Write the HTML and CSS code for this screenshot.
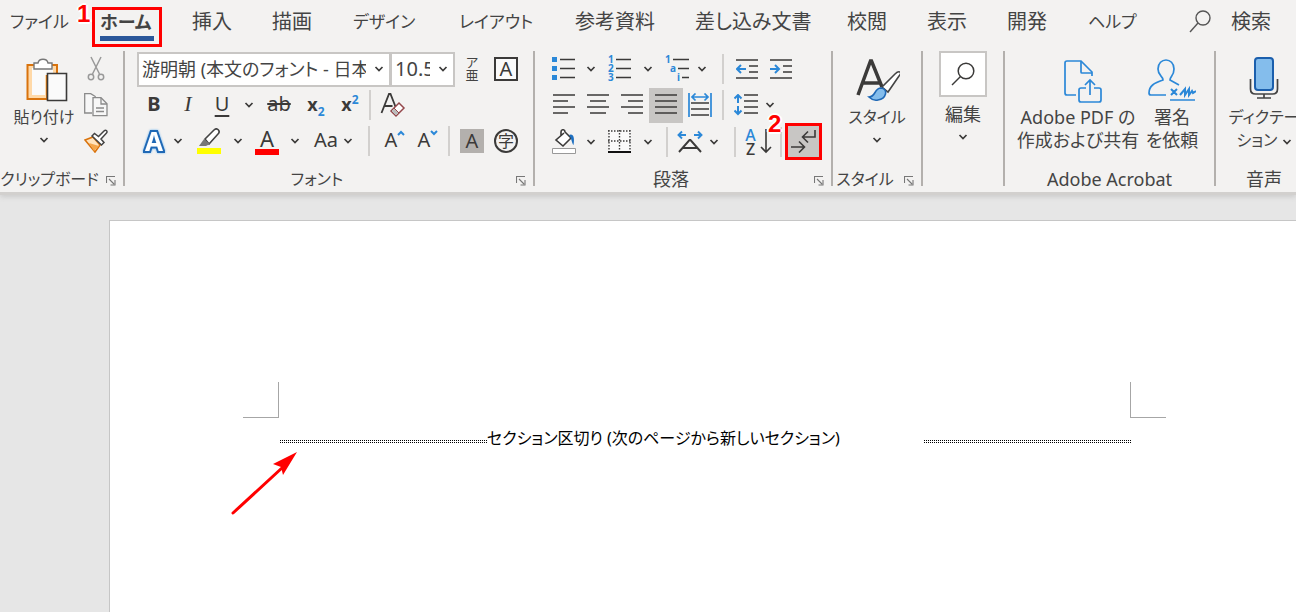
FILE: index.html
```html
<!DOCTYPE html>
<html lang="ja">
<head>
<meta charset="utf-8">
<title>Word</title>
<link rel="stylesheet" href="styles.css">
</head>
<body>
<svg class="defs" aria-hidden="true">
  <symbol id="caret" viewBox="0 0 10 8"><path d="M1.500 2L5 5.500 8.500 2" fill="none" stroke="#3b3a39" stroke-width="1.700"/></symbol>
  <symbol id="launcher" viewBox="0 0 10 10"><path d="M.5 7V.5H9M3 3l5 5M9 4v5H4.500" fill="none" stroke="#777" stroke-width="1.100"/></symbol>
</svg>

<header class="app-header">
  <nav class="tabs" aria-label="リボン タブ">
    <a class="tab kana" href="#">ファイル</a>
    <a class="tab kana current" href="#" aria-current="page">ホーム<span class="step step-one">1</span></a>
    <a class="tab" href="#">挿入</a>
    <a class="tab" href="#">描画</a>
    <a class="tab kana" href="#">デザイン</a>
    <a class="tab kana" href="#">レイアウト</a>
    <a class="tab" href="#">参考資料</a>
    <a class="tab" href="#">差し込み文書</a>
    <a class="tab" href="#">校閲</a>
    <a class="tab" href="#">表示</a>
    <a class="tab" href="#">開発</a>
    <a class="tab kana" href="#">ヘルプ</a>
    <a class="tab search" href="#"><svg width="22" height="24" viewBox="0 0 22 24"><g fill="none" stroke="#555" stroke-width="1.400"><circle cx="14" cy="9" r="7"/><path d="M9 14L1 23"/></g></svg>検索</a>
  </nav>

  <div class="ribbon">
    <section class="group clipboard" aria-label="クリップボード">
      <div class="clip-body">
        <button class="big">
          <svg width="48" height="46" viewBox="-6 0 48 46"><path d="M3 8h28v10H21v24H1.500V8z" fill="#ffd9a8" stroke="#d9730d" stroke-width="2"/><path d="M6 11h21v7h-8v20H6z" fill="#fafafa"/><path d="M8 12V6h4c1-5 9-5 10 0h4v6z" fill="#fff" stroke="#777" stroke-width="1.400"/><path d="M21.500 16.500h19v27h-19z" fill="#fafafa" stroke="#3b3a39" stroke-width="1.600"/></svg>
          <span class="text kana-label">貼り付け</span>
          <svg class="caret"><use href="#caret"/></svg>
        </button>
        <div class="stack">
          <button aria-label="切り取り"><svg width="18" height="26" viewBox="0 0 18 26"><g fill="none" stroke="#999" stroke-width="1.500"><path d="M4 1l8.500 17M14 1L5.500 18"/><circle cx="4" cy="21" r="2.700"/><circle cx="14" cy="21" r="2.700"/></g></svg></button>
          <button aria-label="コピー"><svg width="24" height="24" viewBox="0 0 24 24"><g fill="#f7f7f7" stroke="#8a8a8a" stroke-width="1.300"><path d="M8 20H.7V.7h6l5 3"/><path d="M9 4.700h8l6 6v12H9z"/><path d="M17 5v6h6M12 15h8M12 18.500h8" fill="none"/></g></svg></button>
          <button aria-label="書式のコピー"><svg width="24" height="24" viewBox="0 0 24 24"><path d="M1 11l8-3 7 8-5 7z" fill="#ffe3bd" stroke="#d9730d" stroke-width="1.600"/><path d="M5 14l10 3-5 5z" fill="#f5a64a"/><path d="M8 7l2.500-2.500 4 3L20 2c2-2 4 .5 2.500 2L17 10l3 3.500L17.500 16z" fill="#fff" stroke="#444" stroke-width="1.500"/></svg></button>
        </div>
      </div>
      <footer class="caption kana-label"><span>クリップボード</span><button class="launch" aria-label="クリップボード オプション"><svg width="10" height="10"><use href="#launcher"/></svg></button></footer>
    </section>
    <i class="divider"></i>

    <section class="group font" aria-label="フォント">
      <div class="row font-one">
        <label class="combo"><input type="text" aria-label="フォント名" value="游明朝 (本文のフォント - 日本語)"><svg class="caret"><use href="#caret"/></svg></label>
        <label class="combo size"><input type="text" aria-label="フォント サイズ" value="10.5"><svg class="caret"><use href="#caret"/></svg></label>
        <button class="ruby" aria-label="ルビ"><span>ア</span><span>亜</span></button>
        <button aria-label="囲み線"><span class="boxed">A</span></button>
      </div>
      <div class="row font-two">
        <button class="glyph bold">B</button>
        <button class="glyph italic">I</button>
        <button class="glyph under">U</button>
        <button aria-label="下線の種類"><svg class="caret"><use href="#caret"/></svg></button>
        <button class="glyph strike">ab</button>
        <button class="glyph script">x<sub>2</sub></button>
        <button class="glyph script">x<sup>2</sup></button>
        <i class="rule"></i>
        <button aria-label="書式のクリア"><svg width="26" height="26" viewBox="0 0 26 26"><path d="M1.500 21L9 2h1.500L16 16M4.500 14h8" fill="none" stroke="#3b3a39" stroke-width="1.800"/><path d="M11 19l8-8 5 5-8 8z" fill="#fff" stroke="#94474b" stroke-width="1.500"/><path d="M11 19l3-3 5 5-3 3z" fill="#bbb" stroke="#94474b"/></svg></button>
      </div>
      <div class="row font-three">
        <button class="effect">A</button>
        <button aria-label="文字の効果"><svg class="caret"><use href="#caret"/></svg></button>
        <button aria-label="蛍光ペン"><svg width="24" height="26" viewBox="0 0 24 26"><path d="M8 11l9-9c3-3 7 1 4 4l-9 10z" fill="#fff" stroke="#444" stroke-width="1.600"/><path d="M7 11l6 5-4 2H2z" fill="#777"/><path d="M0 20h24v6H0z" fill="#ff0"/></svg></button>
        <button aria-label="蛍光ペンの色"><svg class="caret"><use href="#caret"/></svg></button>
        <button class="ink">A</button>
        <button aria-label="フォントの色の種類"><svg class="caret"><use href="#caret"/></svg></button>
        <button class="glyph case">Aa</button>
        <button aria-label="文字種の変換"><svg class="caret"><use href="#caret"/></svg></button>
        <i class="rule"></i>
        <button class="glyph grow">A<svg width="8" height="6" viewBox="0 0 8 6"><path d="M1 5l3-3 3 3" fill="none" stroke="#2b88d8" stroke-width="2"/></svg></button>
        <button class="glyph grow">A<svg width="8" height="6" viewBox="0 0 8 6"><path d="M1 1l3 3 3-3" fill="none" stroke="#2b88d8" stroke-width="2"/></svg></button>
        <i class="rule"></i>
        <button aria-label="文字の網かけ"><span class="shaded">A</span></button>
        <button aria-label="囲い文字"><span class="circled">字</span></button>
      </div>
      <footer class="caption kana-label"><span>フォント</span><button class="launch" aria-label="フォント オプション"><svg width="10" height="10"><use href="#launcher"/></svg></button></footer>
    </section>
    <i class="divider"></i>

    <section class="group paragraph" aria-label="段落">
      <div class="row para-one">
        <button aria-label="箇条書き"><svg width="24" height="24" viewBox="0 0 24 24"><path d="M0 0h5v5H0zM0 9h5v5H0zM0 18h5v5H0z" fill="#2b88d8"/><path d="M8 2.500h15M8 11.500h15M8 20.500h15" stroke="#3b3a39" stroke-width="1.500"/></svg></button>
        <button aria-label="行頭文字"><svg class="caret"><use href="#caret"/></svg></button>
        <button aria-label="段落番号"><svg class="list-icon" width="24" height="26" viewBox="0 0 24 26"><g class="tiny"><text x="0" y="7">1</text><text x="0" y="16">2</text><text x="0" y="25">3</text></g><path d="M8 3.500h15M8 12.500h15M8 21.500h15" stroke="#3b3a39" stroke-width="1.500"/></svg></button>
        <button aria-label="番号の種類"><svg class="caret"><use href="#caret"/></svg></button>
        <button aria-label="アウトライン"><svg class="list-icon" width="32" height="26" viewBox="0 0 32 26"><g class="tiny"><text x="6" y="7">1</text><text x="11" y="16">a</text><text x="18" y="25">i</text></g><path d="M14 3.500h16M19 12.500h11M23 21.500h7" stroke="#3b3a39" stroke-width="1.500"/></svg></button>
        <button aria-label="リストの種類"><svg class="caret"><use href="#caret"/></svg></button>
        <i class="rule"></i>
        <button aria-label="インデントを減らす"><svg width="22" height="20" viewBox="0 0 22 20"><path d="M0 1h22M13 7h9M13 13h9M0 19h22" stroke="#3b3a39" stroke-width="1.600"/><path d="M10 10H1M5 6l-4 4 4 4" fill="none" stroke="#2b88d8" stroke-width="2"/></svg></button>
        <button aria-label="インデントを増やす"><svg width="22" height="20" viewBox="0 0 22 20"><path d="M0 1h22M13 7h9M13 13h9M0 19h22" stroke="#3b3a39" stroke-width="1.600"/><path d="M0 10h9M5 6l4 4-4 4" fill="none" stroke="#2b88d8" stroke-width="2"/></svg></button>
      </div>
      <div class="row para-two">
        <button aria-label="左揃え"><svg width="22" height="22" viewBox="0 0 22 22"><path d="M0 1h22M0 7h15M0 13h22M0 19h15" stroke="#3b3a39" stroke-width="1.600"/></svg></button>
        <button aria-label="中央揃え"><svg width="22" height="22" viewBox="0 0 22 22"><path d="M0 1h22M3 7h16M0 13h22M3 19h16" stroke="#3b3a39" stroke-width="1.600"/></svg></button>
        <button aria-label="右揃え"><svg width="22" height="22" viewBox="0 0 22 22"><path d="M0 1h22M7 7h15M0 13h22M7 19h15" stroke="#3b3a39" stroke-width="1.600"/></svg></button>
        <button class="on" aria-label="両端揃え" aria-pressed="true"><svg width="22" height="22" viewBox="0 0 22 22"><path d="M0 1h22M0 7h22M0 13h22M0 19h22" stroke="#3b3a39" stroke-width="1.600"/></svg></button>
        <button aria-label="均等割り付け"><svg width="24" height="24" viewBox="0 0 24 24"><path d="M1 0v24M23 0v24M4 4h16M7.500.5L4 4l3.500 3.500M16.500.5L20 4l-3.500 3.500" fill="none" stroke="#2b88d8" stroke-width="1.700"/><path d="M3 10h18M3 16h18M3 22h18" stroke="#3b3a39" stroke-width="1.700"/></svg></button>
        <i class="rule"></i>
        <button aria-label="行と段落の間隔"><svg width="24" height="22" viewBox="0 0 24 22"><path d="M10 1h14M10 7h14M10 13h14M10 19h14" stroke="#3b3a39" stroke-width="1.600"/><path d="M4 9V1M.5 4.500L4 1l3.500 3.500M4 12v8M.5 16.500L4 20l3.500-3.500" fill="none" stroke="#2b88d8" stroke-width="2"/></svg></button>
        <button aria-label="行間の種類"><svg class="caret"><use href="#caret"/></svg></button>
      </div>
      <div class="row para-three">
        <button aria-label="塗りつぶし"><svg width="24" height="26" viewBox="0 0 24 26"><path d="M12 4L4 11l7 6 8-8-6-6c0-3-4-3-4 0v4" fill="#fff" stroke="#3b3a39" stroke-width="1.600"/><path d="M17 6c4-2 6 2 4.500 10C20 15 20 10 17 6z" fill="#1e6fc0"/><path d="M.5 19.500h23v5H.5z" fill="#fff" stroke="#999"/></svg></button>
        <button aria-label="塗りつぶしの色"><svg class="caret"><use href="#caret"/></svg></button>
        <button aria-label="罫線"><svg width="24" height="26" viewBox="0 0 24 26"><path d="M1 1h22v21H1z" fill="#fafafa"/><path d="M0 2h23M0 12h23M1 1v21M11.500 1v21M22 1v21" stroke="#3b3a39" stroke-width="1.400" stroke-dasharray="1.500 1.500"/><path d="M0 23h23" stroke="#111" stroke-width="2"/></svg></button>
        <button aria-label="罫線の種類"><svg class="caret"><use href="#caret"/></svg></button>
        <i class="rule"></i>
        <button aria-label="拡張書式"><svg width="26" height="24" viewBox="0 0 26 24"><path d="M2 22L12.500 10h1L24 22M6 18h14" fill="none" stroke="#3b3a39" stroke-width="1.900"/><path d="M9 5H2M5 1.500L1.500 5 5 8.500M17 5h7M21 1.500L24.500 5 21 8.500" fill="none" stroke="#2b88d8" stroke-width="1.900"/></svg></button>
        <button aria-label="拡張書式の種類"><svg class="caret"><use href="#caret"/></svg></button>
        <i class="rule"></i>
        <button class="sort" aria-label="並べ替え"><span><b>A</b><b>Z</b></span><svg width="12" height="26" viewBox="0 0 12 26"><path d="M6 0v23M1 18l5 5 5-5" fill="none" stroke="#3b3a39" stroke-width="1.600"/></svg></button>
        <i class="rule"></i>
        <button class="marks" aria-label="編集記号の表示/非表示" aria-pressed="true"><svg width="25" height="23" viewBox="0 0 25 23"><path d="M24 0v7H12M17 1.500L11.500 7l5.500 5.500M0 17h13M8 11.500l5.500 5.500L8 22.500" fill="none" stroke="#3b3a39" stroke-width="1.600"/></svg><span class="step step-two">2</span></button>
      </div>
      <footer class="caption"><span>段落</span><button class="launch" aria-label="段落オプション"><svg width="10" height="10"><use href="#launcher"/></svg></button></footer>
    </section>
    <i class="divider"></i>

    <section class="group styles" aria-label="スタイル">
      <button class="big">
        <svg width="46" height="46" viewBox="-2 0 46 46"><path d="M2 38L14.500 4h1L26 30M7 26h17" fill="none" stroke="#3b3a39" stroke-width="3.500"/><path d="M26 30L39 17c4-4 8-2 4 2L32 35z" fill="#fff" stroke="#444" stroke-width="1.600"/><path d="M13 40c7 0 5-9 12-9 8 1 5 11-3 12-4 1-7-1-9-3z" fill="#84bdec" stroke="#1f68b5" stroke-width="1.600"/></svg>
        <span class="text kana-label">スタイル</span>
        <svg class="caret"><use href="#caret"/></svg>
      </button>
      <footer class="caption kana-label"><span>スタイル</span><button class="launch" aria-label="スタイル オプション"><svg width="10" height="10"><use href="#launcher"/></svg></button></footer>
    </section>
    <i class="divider"></i>

    <section class="group editing" aria-label="編集">
      <button class="big find">
        <span class="find-box"><svg width="24" height="24" viewBox="0 0 24 24"><g fill="none" stroke="#3b3a39" stroke-width="1.500"><circle cx="15" cy="9" r="7.800"/><path d="M9.500 14.500L1 23"/></g></svg></span>
        <span class="text">編集</span>
        <svg class="caret"><use href="#caret"/></svg>
      </button>
    </section>
    <i class="divider"></i>

    <section class="group acrobat" aria-label="Adobe Acrobat">
      <div class="pair">
        <button class="big wide">
          <svg width="48" height="46" viewBox="0 0 48 46"><g fill="none" stroke="#2b88d8" stroke-width="1.700"><path d="M22 38H13q-2 0-2-2V6q0-2 2-2h14l11 11v4"/><path d="M27 4v11q0 1 1 1h10M32 31h-5q-2 0-2 2v10q0 2 2 2h18q2 0 2-2V33q0-2-2-2h-5M36 38V23M31 28l5-5 5 5"/></g></svg>
          <span class="text">Adobe PDF の<br>作成および共有</span>
        </button>
        <button class="big narrow">
          <svg width="48" height="46" viewBox="0 0 48 46"><g fill="none" stroke="#2b88d8" stroke-width="1.700"><path d="M18 38H3q-2 0-2-2c0-7 5-10 14-13 0-4-5-4-5-11 0-12 16-12 16 0 0 7-4 7-4 11l9 5M22 43h25"/><path d="M23 32l6 6M29 32l-6 6M32 38l5-6v6l4-6v6l3-4 1 2 3-2" stroke-width="2"/></g></svg>
          <span class="text">署名<br>を依頼</span>
        </button>
      </div>
      <footer class="caption"><span>Adobe Acrobat</span></footer>
    </section>
    <i class="divider"></i>

    <section class="group voice" aria-label="音声">
      <button class="big">
        <svg width="30" height="46" viewBox="0 0 30 46"><rect x="6" y="1" width="18" height="32" rx="3" fill="#84bdec" stroke="#1b5fad" stroke-width="2"/><path d="M1.500 22v10q0 5 5 5h17q5 0 5-5V22M15 37v4M8 41h14" fill="none" stroke="#444" stroke-width="1.700"/></svg>
        <span class="text kana-label">ディクテー<br>ション <svg class="caret"><use href="#caret"/></svg></span>
      </button>
      <footer class="caption"><span>音声</span></footer>
    </section>
  </div>
</header>

<main class="canvas">
  <article class="page">
    <div class="crops"><i class="crop crop-left"></i><i class="crop crop-right"></i></div>
    <p class="break"><i class="dots"></i><span class="break-text">セクション区切り (次のページから新しいセクション)</span><i class="dots"></i></p>
    <svg class="arrow" width="68" height="64" viewBox="0 0 68 64"><path d="M2 61L52 15" stroke="red" stroke-width="3" stroke-linecap="round"/><path d="M66 0L42 12l8 3 2 8z" fill="red"/></svg>
  </article>
</main>
</body>
</html>
```
FILE: styles.css
```css
* { box-sizing: border-box; }

body {
  margin: 0;
  min-height: 100vh;
  display: flex;
  flex-direction: column;
  overflow: hidden;
  background: #e6e6e6;
  color: #444;
  font: 18px/24px "Noto Sans", "Noto Sans CJK JP", sans-serif;
  font-feature-settings: "palt";
}

button {
  margin: 0;
  padding: 0;
  border: 0;
  background: none;
  color: inherit;
  font: inherit;
  font-feature-settings: inherit;
}

svg { display: block; flex: none; }
.defs { position: absolute; width: 0; height: 0; }
.caret { width: 10px; height: 8px; }

.app-header {
  background: #f3f2f1;
  border-bottom: 3px solid #d2d0ce;
  box-shadow: 0 2px 5px #ccc;
  z-index: 1;
}

.tabs {
  display: grid;
  grid-template-columns: 82px 100px 80px 81px 106px 116px 120px 152px 80px 80px 81px 101px auto;
  height: 51px;
  padding: 7px 0 4px 10px;
}

.tab {
  color: #444;
  font-size: 20px;
  line-height: 30px;
  text-decoration: none;
  white-space: nowrap;
}

.kana { font-size: 17px; }

.current {
  position: relative;
  justify-self: start;
  width: 70px;
  padding: 0 5px;
  border: 3px solid red;
  font-size: 18px;
  font-weight: bold;
  line-height: 24px;
}

.current::after {
  content: "";
  display: block;
  height: 5px;
  margin-top: 2px;
  background: #2b579a;
}

.search { display: flex; gap: 20px; }
.search svg { margin-top: 2px; }

.step {
  position: absolute;
  color: red;
  font: bold 24px/24px "Liberation Sans", sans-serif;
  text-shadow: -2px 0 #fff, 2px 0 #fff, 0 -2px #fff, 0 2px #fff;
}

.step-one { left: -18px; top: -8px; }
.step-two { left: -20px; top: -14px; }

.ribbon { display: flex; height: 141px; overflow: hidden; }
.divider { flex: none; width: 2px; height: 135px; background: #b3b0ad; }

.group { display: flex; flex-direction: column; flex: none; }
.clipboard { width: 123px; }
.font { width: 408px; }
.paragraph { width: 296px; }
.styles { width: 88px; }
.editing { width: 80px; }
.acrobat { width: 209px; }
.voice { width: 96px; }

.caption { display: flex; margin-top: auto; padding-bottom: 1px; white-space: nowrap; }
.caption span { flex: 1; display: flex; justify-content: center; width: 0; }
.launch { width: 24px; display: grid; place-items: center; padding-top: 4px; }
.kana-label { font-size: 16px; }

.big {
  display: flex;
  flex-direction: column;
  align-items: center;
  padding-top: 6px;
}

.big .text { margin-top: 3px; line-height: 23px; white-space: nowrap; }
.big > .caret { margin-top: 7px; }
.text .caret { display: inline-block; }

.clip-body { display: grid; grid-template-columns: 88px 16px; }
.stack {
  display: grid;
  grid-template-rows: repeat(3, 36px);
  grid-template-columns: 16px;
  place-items: center;
}

.find { padding-top: 0; }
.find-box {
  display: grid;
  place-items: center;
  width: 48px;
  height: 46px;
  border: 2px solid #c8c6c4;
  background: #fff;
}
.find .text { margin-top: 6px; }

.pair { display: flex; gap: 8px; padding-left: 14px; }
.wide { width: 118px; }
.narrow { width: 54px; }

.row {
  display: grid;
  height: 36px;
  padding-left: 12px;
  align-items: center;
  justify-items: center;
}

.font-one { grid-template-columns: 254px 64px 34px 34px; }
.font-two { grid-template-columns: 34px 34px 34px 20px 40px 34px 34px 6px 40px; }
.font-three { grid-template-columns: 34px 14px 48px 10px 48px 8px 41px 16px 26px 24px 42px 2px 44px 24px; }
.para-one { grid-template-columns: 34px 20px 38px 18px 36px 18px 24px 24px 44px; }
.para-two { grid-template-columns: 34px 34px 34px 34px 34px 12px 34px 14px; }
.para-three { grid-template-columns: 34px 20px 38px 18px 20px 26px 22px 20px 32px 8px 37px; }

.rule { width: 2px; height: 30px; background: #d2d0ce; }

.combo {
  display: flex;
  align-items: center;
  justify-self: stretch;
  height: 35px;
  padding: 0 5px 0 3px;
  border: 2px solid #c8c6c4;
  background: #fff;
}

.combo input {
  flex: 1;
  width: 0;
  min-width: 0;
  margin-right: 8px;
  padding: 0;
  border: 0;
  background: none;
  color: #444;
  font: inherit;
  font-feature-settings: inherit;
}

.size { border-left-width: 1px; }
.size input { font-size: 20px; }

.ruby { display: grid; justify-items: center; font-size: 13px; line-height: 13px; }

.boxed, .shaded, .circled {
  display: grid;
  place-items: center;
  width: 24px;
  height: 24px;
  font-size: 20px;
  line-height: 20px;
  color: #3b3a39;
}
.boxed { border: 2px solid #3b3a39; background: #fafafa; }
.shaded { background: #b3b0ad; }
.circled { border: 2px solid #3b3a39; border-radius: 50%; font-size: 16px; }

.glyph { color: #3b3a39; font-size: 20px; line-height: 22px; padding-bottom: 2px; }
.bold { font-weight: bold; }
.italic { font-family: "Liberation Serif", serif; font-style: italic; font-size: 22px; }
.under { text-decoration: underline; text-underline-offset: 4px; }
.strike { text-decoration: line-through; }
.script { font-weight: bold; font-size: 18px; }
.script sub, .script sup { color: #2b88d8; font-size: 12px; line-height: 0; }

.effect {
  color: #fff;
  font-size: 26px;
  font-weight: bold;
  -webkit-text-stroke: 4px #1f68b5;
  paint-order: stroke fill;
  filter: drop-shadow(0 0 1px #6cb5f0);
}

.ink {
  width: 24px;
  height: 27px;
  border-bottom: 6px solid red;
  color: #3b3a39;
  font-size: 22px;
  line-height: 20px;
}

.case { justify-self: end; padding-right: 2px; }
.grow { display: flex; padding-left: 2px; }
.grow svg { margin-top: 1px; }

.list-icon { overflow: visible; }
.tiny { fill: #2b88d8; font: bold 10px "Noto Sans", sans-serif; }

.on { width: 34px; height: 35px; display: grid; place-items: center; background: #c8c6c4; }

.sort { display: flex; align-items: center; gap: 4px; padding-right: 5px; }
.sort span { display: grid; }
.sort b { color: #3b3a39; font-size: 16px; font-weight: 500; line-height: 14px; }
.sort b:first-child { color: #2b88d8; }

.marks {
  position: relative;
  display: grid;
  place-items: center;
  width: 37px;
  height: 37px;
  border: 3px solid red;
  background: #c8c6c4;
}

.canvas { flex: 1; display: flex; padding: 25px 0 0 109px; }

.page {
  position: relative;
  flex: 1;
  padding: 161px 130px 0 133px;
  border: 1px solid #c6c6c6;
  border-width: 1px 0 0 1px;
  background: #fff;
}

.crops { display: flex; justify-content: space-between; }
.crop { width: 36px; height: 36px; border-bottom: 1px solid #a6a6a6; }
.crop-left { border-right: 1px solid #a6a6a6; }
.crop-right { border-left: 1px solid #a6a6a6; }

.break {
  display: flex;
  align-items: center;
  margin: 8px 0 0;
  padding: 0 35px 0 37px;
  color: #000;
  font-size: 16px;
}
.break-text { flex: 1; white-space: nowrap; }

.dots {
  flex: none;
  width: 207px;
  height: 3px;
  margin-top: 6px;
  background:
    linear-gradient(transparent 1px, #fff 1px 2px, transparent 2px),
    repeating-linear-gradient(90deg, #000 0 1px, #fff 1px 2px);
}

.arrow { position: absolute; left: 121px; top: 231px; }
```
